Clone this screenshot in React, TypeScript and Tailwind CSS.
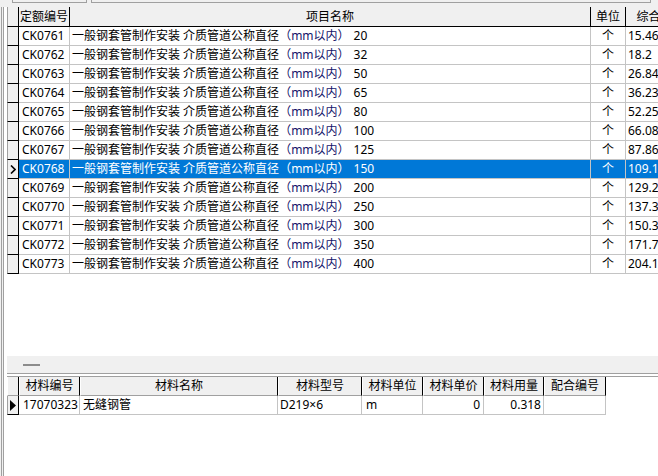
import React from "react";

const FONT = "font-['Noto_Sans','Noto_Sans_CJK_SC',sans-serif]";

const rows = [
  ["CK0761", "20", "15.46"],
  ["CK0762", "32", "18.2"],
  ["CK0763", "50", "26.84"],
  ["CK0764", "65", "36.23"],
  ["CK0765", "80", "52.25"],
  ["CK0766", "100", "66.08"],
  ["CK0767", "125", "87.86"],
  ["CK0768", "150", "109.1"],
  ["CK0769", "200", "129.2"],
  ["CK0770", "250", "137.3"],
  ["CK0771", "300", "150.3"],
  ["CK0772", "350", "171.7"],
  ["CK0773", "400", "204.1"],
];

function Chevron() {
  return (
    <svg width="6" height="9" viewBox="0 0 6 9" className="block">
      <polyline points="1,0.5 5,4.5 1,8.5" fill="none" stroke="#000" strokeWidth="1.6" />
    </svg>
  );
}

function Triangle() {
  return (
    <svg width="6" height="11" viewBox="0 0 6 11" className="block">
      <polygon points="0,0 6,5.5 0,11" fill="#000" />
    </svg>
  );
}

function MainHeader() {
  const h = "h-[20px] shrink-0 bg-[#f0f0f0] border-r border-b border-black flex items-center justify-center overflow-hidden whitespace-nowrap text-black";
  return (
    <div className="flex">
      <div className={`${h} w-[12px] border-l border-l-[#a0a0a0]`} />
      <div className={`${h} w-[51px] justify-start pl-[1px]`}>定额编号</div>
      <div className={`${h} w-[521px]`}>项目名称</div>
      <div className={`${h} w-[35px]`}>单位</div>
      <div className={`${h} w-[70px]`}>综合单价</div>
    </div>
  );
}

function MainRow({ code, dia, price, sel }: { code: string; dia: string; price: string; sel: boolean }) {
  const cell = "h-[19px] shrink-0 border-r border-b border-[#c4c4c4] flex items-center overflow-hidden whitespace-nowrap";
  const bg = sel ? "bg-[#0078d7] text-white" : "bg-white text-black";
  return (
    <div className="flex">
      <div className="h-[19px] w-[12px] shrink-0 bg-[#f0f0f0] border-l border-l-[#a0a0a0] border-r border-r-black border-b border-b-black flex items-center justify-center">
        {sel ? <Chevron /> : null}
      </div>
      <div className={`${cell} ${bg} w-[51px] pl-[3px] ${sel ? "" : "text-[#10106a]"}`}>{code}</div>
      <div className={`${cell} ${bg} w-[521px] pl-[2px]`}>
        一般钢套管制作安装 介质管道公称直径<span className={sel ? "" : "text-[#14146a]"}>（mm以内）</span>
        <span className="ml-[4px]">{dia}</span>
      </div>
      <div className={`${cell} ${bg} w-[35px] justify-center`}>个</div>
      <div className={`${cell} ${sel ? "bg-[#0078d7] text-white" : "bg-white text-black"} w-[70px] pl-[2px]`}>{price}</div>
    </div>
  );
}

function SubHeader() {
  const h = "h-[19px] shrink-0 bg-[#f0f0f0] border-l border-l-white border-r border-r-black border-b border-b-[#a0a0a0] flex items-center justify-center whitespace-nowrap overflow-hidden text-black";
  return (
    <div className="flex">
      <div className={`${h} w-[12px] border-l-[#a0a0a0]`} />
      <div className={`${h} w-[61px]`}>材料编号</div>
      <div className={`${h} w-[198px]`}>材料名称</div>
      <div className={`${h} w-[84px]`}>材料型号</div>
      <div className={`${h} w-[61px]`}>材料单位</div>
      <div className={`${h} w-[61px]`}>材料单价</div>
      <div className={`${h} w-[60px]`}>材料用量</div>
      <div className={`${h} w-[62px]`}>配合编号</div>
    </div>
  );
}

function SubRow() {
  const c = "h-[19px] shrink-0 bg-white border-r border-b border-[#c4c4c4] flex items-center whitespace-nowrap overflow-hidden text-black";
  return (
    <div className="flex">
      <div className="h-[19px] w-[12px] shrink-0 bg-[#f0f0f0] border-l border-l-[#a0a0a0] border-r border-r-black border-b border-b-black flex items-center justify-center">
        <Triangle />
      </div>
      <div className={`${c} w-[61px] pl-[4px] text-[#10106a]`}>17070323</div>
      <div className={`${c} w-[198px] pl-[3px]`}>无缝钢管</div>
      <div className={`${c} w-[84px] pl-[2px]`}>D219×6</div>
      <div className={`${c} w-[61px] pl-[4px]`}>m</div>
      <div className={`${c} w-[61px] justify-end pr-[3px]`}>0</div>
      <div className={`${c} w-[60px] justify-end pr-[2px]`}>0.318</div>
      <div className={`${c} w-[62px]`}></div>
    </div>
  );
}

export default function App() {
  return (
    <div className={`${FONT} text-[12px] leading-none w-[658px] h-[476px] bg-[#f0f0f0] overflow-hidden flex flex-col`}>
      {/* top strip */}
      <div className="h-[7px] shrink-0 flex items-start">
        <div className="w-[12px] shrink-0" />
        <div className="w-[75px] h-[3px] shrink-0 border-l border-r border-b border-[#a0a0a0]" />
        <div className="w-[4px] shrink-0" />
        <div className="w-[560px] h-[3px] shrink-0 border-l border-r border-b border-[#a0a0a0]" />
      </div>
      {/* main panel */}
      <div className="flex-1 flex min-h-0">
        <div className="w-[7px] shrink-0 flex">
          <div className="w-[1px] bg-[#f0f0f0]" />
          <div className="w-[1px] bg-[#a0a0a0]" />
          <div className="w-[1px] bg-[#f0f0f0]" />
          <div className="w-[1px] bg-[#a0a0a0]" />
          <div className="w-[3px] bg-white" />
        </div>
        <div className="flex-1 flex flex-col min-w-0">
          <div className="h-[349px] shrink-0 bg-white overflow-hidden">
            <MainHeader />
            {rows.map((r, i) => (
              <MainRow key={r[0]} code={r[0]} dia={r[1]} price={r[2]} sel={i === 7} />
            ))}
          </div>
          <div className="h-[17px] shrink-0 bg-[#f0f0f0] flex items-center pl-[16px]">
            <div className="w-[17px] h-[2px] bg-[#8c8c8c]" />
          </div>
          <div className="h-[1px] shrink-0 bg-[#a0a0a0]" />
          <div className="h-[2px] shrink-0 bg-white" />
          <div className="h-[1px] shrink-0 bg-[#a0a0a0]" />
          <div className="flex-1 bg-white">
            <SubHeader />
            <SubRow />
          </div>
        </div>
      </div>
    </div>
  );
}
